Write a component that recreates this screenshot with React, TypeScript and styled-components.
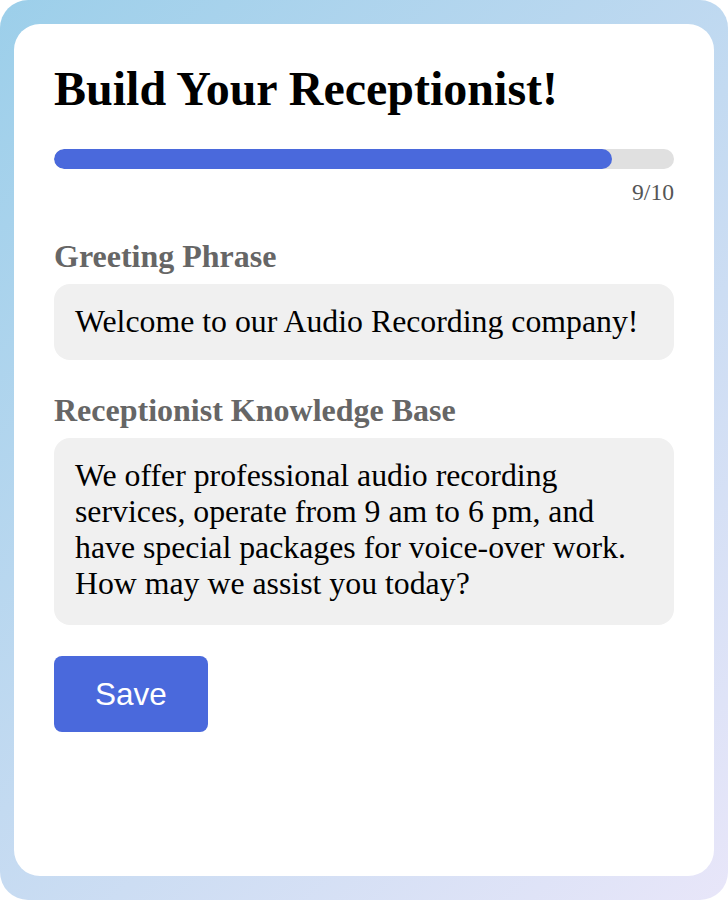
import styled, { createGlobalStyle } from 'styled-components'

const GlobalStyle = createGlobalStyle`
  html, body {
    margin: 0;
    padding: 0;
    background: #ffffff;
  }
  * {
    box-sizing: border-box;
  }
`

const Backdrop = styled.div`
  width: 728px;
  height: 900px;
  padding: 24px 14px;
  border-radius: 28px;
  background: linear-gradient(135deg, #9ccfea 0%, #c3daf1 50%, #e8e6f9 100%);
`

const Card = styled.div`
  height: 100%;
  background: #ffffff;
  border-radius: 26px;
  padding: 38px 40px;
  display: flex;
  flex-direction: column;
  font-family: 'Liberation Serif', 'Times New Roman', serif;
`

const Title = styled.h1`
  margin: 0;
  font-size: 48px;
  line-height: 54px;
  font-weight: bold;
  color: #000000;
`

const ProgressTrack = styled.div`
  margin-top: 33px;
  height: 20px;
  border-radius: 10px;
  background: #e0e0e0;
  overflow: hidden;
`

const ProgressFill = styled.div`
  height: 100%;
  border-radius: 10px;
  background: #4a69dc;
`

const ProgressCount = styled.div`
  margin-top: 10px;
  text-align: right;
  font-size: 23.6px;
  line-height: 27px;
  color: #555555;
`

const Field = styled.div`
  display: flex;
  flex-direction: column;
  gap: 10px;
  margin-top: ${(props: { $top: number }) => props.$top}px;
`

const Label = styled.label`
  font-size: 32px;
  line-height: 36px;
  font-weight: bold;
  color: #666666;
`

const InputBox = styled.div`
  background: #f0f0f0;
  border-radius: 16px;
  padding: 20px 21px;
  font-size: 31.8px;
  line-height: 36px;
  color: #000000;
  white-space: pre-line;
  min-height: ${(props: { $minHeight: number }) => props.$minHeight}px;
`

const SaveButton = styled.button`
  align-self: flex-start;
  margin-top: 31px;
  padding: 20px 41px;
  border: none;
  border-radius: 8px;
  background: #4a69dc;
  color: #ffffff;
  font-family: 'Liberation Sans', Arial, sans-serif;
  font-size: 31.5px;
  line-height: 36px;
  cursor: pointer;
`

const knowledge = `We offer professional audio recording
services, operate from 9 am to 6 pm, and
have special packages for voice-over work.
How may we assist you today?`

export default function App() {
  const step = 9
  const total = 10

  return (
    <>
      <GlobalStyle />
      <Backdrop>
        <Card>
          <Title>Build Your Receptionist!</Title>
          <ProgressTrack>
            <ProgressFill style={{ width: `${(step / total) * 100}%` }} />
          </ProgressTrack>
          <ProgressCount>{step}/{total}</ProgressCount>

          <Field $top={32}>
            <Label>Greeting Phrase</Label>
            <InputBox $minHeight={76}>Welcome to our Audio Recording company!</InputBox>
          </Field>

          <Field $top={32}>
            <Label>Receptionist Knowledge Base</Label>
            <InputBox $minHeight={187}>{knowledge}</InputBox>
          </Field>

          <SaveButton>Save</SaveButton>
        </Card>
      </Backdrop>
    </>
  )
}
